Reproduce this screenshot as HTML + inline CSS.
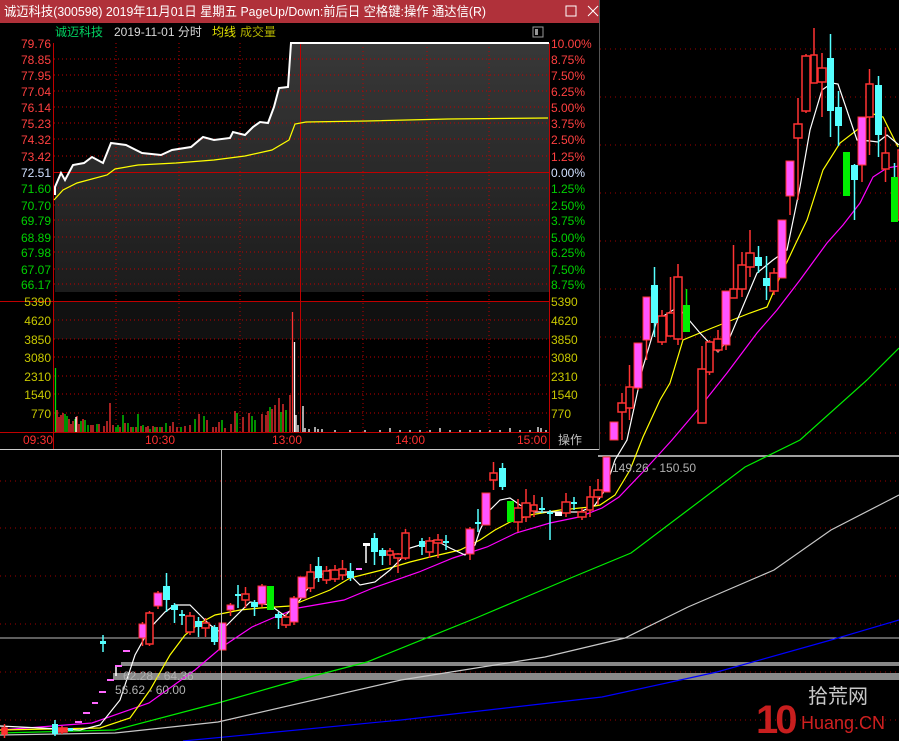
<!DOCTYPE html>
<html><head><meta charset="utf-8"><style>
html,body{margin:0;padding:0;background:#000;width:899px;height:741px;overflow:hidden}
svg{display:block;font-family:"Liberation Sans","Noto Sans CJK SC",sans-serif}
.h{fill:#000;stroke:#ff3333;stroke-width:1.5}
.p{fill:#ff55ff;stroke:#ff3333;stroke-width:1}
.c{fill:#55ffff}
.g{fill:#00ee00}
</style></head><body>
<svg width="899" height="741" viewBox="0 0 899 741" xmlns="http://www.w3.org/2000/svg">
<rect width="899" height="741" fill="#000"/>
<g stroke="#a00000" stroke-dasharray="1,4" stroke-width="1">
<path d="M0 49H899M0 97H899M0 145H899M0 193H899M0 241H899M0 289H899M0 337H899M0 385H899M0 433H899M0 481H899M0 528H899M0 576H899M0 624H899M0 672H899M0 720H899"/>
</g>
<path d="M598 456H899" stroke="#a0a0a0" stroke-width="2"/>
<path d="M0 638H899" stroke="#bbbbbb" stroke-width="1"/>
<rect x="121" y="662" width="778" height="4" fill="#888"/>
<rect x="113" y="673" width="786" height="7" fill="#888"/>
<g fill="none" stroke-width="1.2">
<polyline stroke="#0000ff" points="183,741 401,720 602,697 717,672 831,640 899,620"/>
<polyline stroke="#c8c8c8" points="0,735 115,733 218,722 401,680 545,657 625,638 688,607 774,570 831,530 899,495"/>
<polyline stroke="#00ee00" points="0,733 115,730 218,703 298,680 367,662 476,618 573,577 631,553 688,510 745,467 800,440 867,380 899,348"/>
<polyline stroke="#ff00ff" points="0,730 92,723 149,703 195,670 222,647 252,627 275,617 298,608 344,600 373,588 419,572 453,558 487,547 516,533 550,523 579,517 602,508 619,497 642,473 672,440 700,407 727,373 757,333 777,310 800,280 827,243 843,225 860,203 873,177 887,168 899,166"/>
<polyline stroke="#ffff00" points="0,730 100,728 130,718 150,690 170,655 185,635 200,623 215,615 240,610 260,608 290,606 310,598 330,590 350,578 370,573 390,568 410,562 430,557 460,550 480,540 495,530 510,522 530,515 560,510 590,507 600,505 615,495 630,470 643,437 660,400 670,383 683,340 712,328 750,313 767,307 780,277 795,245 807,220 823,170 840,143 857,130 870,113 883,117 898,147"/>
<polyline stroke="#ffffff" points="0,726 80,730 100,725 120,700 135,655 150,628 165,612 175,605 190,605 200,615 210,625 220,632 230,622 250,602 270,605 285,616 300,600 315,578 330,570 350,575 360,585 375,582 390,570 400,560 410,548 420,545 435,540 450,548 465,555 475,545 480,530 490,510 500,500 510,498 520,505 535,512 560,512 580,512 595,505 605,490 615,460 627,440 643,367 657,320 678,307 700,333 718,352 730,337 757,273 773,260 787,250 800,187 810,130 822,90 832,83 838,84 857,140 870,141 878,142 887,135 899,145"/>
</g>
<g stroke-width="1.5">
<path stroke="#ff3333" d="M149.5 611V646M190 612V635M205.5 618V637M245.5 587V608M286 614V628M310.5 564V592M326.5 566V584M335 565V582M342.5 560V580M390 548V565M398 553V573M405.5 529V560M429.5 537V558M438 534V558M493.5 462V490M518 499V532M526 489V522M534 495V517M566 493V517M582 508V520M590 486V517M598 479V505M622 393V440M629.5 365V420M662 310V345M670.5 277V336M678 264V345M702 346V423M709.5 340V375M718 330V352M733.5 245V298M742 252V297M750 230V277M774 268V295M798 98V200M806 54V113M814 28V83M822 53V117M869.5 69V155M885.5 127V182M142.5 622V646M158 591V609M230.5 603V616M262 584V607M294 596V625M470 527V560M638 343V390M646.5 297V360M726 291V350M790 161V215M862 117V182M4.5 724V738M62 726V734"/>
<path stroke="#55ffff" d="M103 635V652M166.5 573V612M174.5 603V623M182 610V625M198.5 617V637M214.5 625V645M238 585V608M254.5 600V616M278.5 612V629M318.5 557V582M350.5 563V581M374.5 533V565M382.5 548V565M422 538V555M446 535V550M478 509V532M502.5 463V490M542 497V513M550 510V540M574 497V510M654.5 267V337M758.5 246V273M766.5 256V300M830.5 34V137M838.5 91V146M854.5 164V220M878.5 76V157M894.5 163V222M55 720V736"/>
<path stroke="#00ee00" d="M686.5 289V332"/>
<path stroke="#fff" d="M366 544V563M116 666V676"/>
</g>
<g class="h">
<rect x="146" y="613" width="7" height="31"/><rect x="186" y="616" width="8" height="16"/><rect x="202" y="623" width="7" height="5"/><rect x="242" y="594" width="7" height="6"/><rect x="282" y="617" width="8" height="8"/><rect x="307" y="572" width="7" height="16"/><rect x="323" y="571" width="7" height="9"/><rect x="331" y="570" width="8" height="9"/><rect x="339" y="569" width="7" height="6"/><rect x="387" y="551" width="6" height="4"/><rect x="394" y="554" width="8" height="4"/><rect x="402" y="533" width="7" height="25"/><rect x="426" y="541" width="7" height="11"/><rect x="434" y="540" width="8" height="3"/><rect x="490" y="473" width="7" height="7"/><rect x="514" y="508" width="8" height="14"/><rect x="522" y="503" width="8" height="14"/><rect x="531" y="505" width="6" height="6"/><rect x="562" y="502" width="8" height="11"/><rect x="578" y="512" width="8" height="5"/><rect x="587" y="497" width="6" height="13"/><rect x="594" y="490" width="8" height="7"/><rect x="618" y="403" width="8" height="9"/><rect x="626" y="387" width="7" height="21"/><rect x="658" y="316" width="8" height="26"/><rect x="667" y="313" width="7" height="23"/><rect x="674" y="277" width="8" height="62"/><rect x="698" y="369" width="8" height="54"/><rect x="706" y="342" width="7" height="30"/><rect x="714" y="339" width="8" height="11"/><rect x="730" y="289" width="7" height="9"/><rect x="738" y="265" width="8" height="24"/><rect x="746" y="253" width="8" height="14"/><rect x="770" y="273" width="8" height="18"/><rect x="794" y="124" width="8" height="14"/><rect x="802" y="56" width="8" height="55"/><rect x="811" y="55" width="6" height="28"/><rect x="818" y="68" width="8" height="14"/><rect x="866" y="84" width="7" height="33"/><rect x="882" y="153" width="7" height="16"/><rect x="898" y="150" width="4" height="70"/>
<rect x="2" y="728" width="5" height="6" fill="#ff3333"/><rect x="58" y="728" width="9" height="4" fill="#ff3333"/>
</g>
<rect x="555" y="512" width="7" height="4" fill="#fff"/>
<g class="p">
<rect x="139" y="624" width="7" height="14"/><rect x="154" y="593" width="8" height="13"/><rect x="219" y="623" width="7" height="27"/><rect x="227" y="605" width="7" height="5"/><rect x="258" y="586" width="8" height="18"/><rect x="290" y="598" width="8" height="24"/><rect x="298" y="577" width="8" height="21"/><rect x="466" y="529" width="8" height="25"/><rect x="482" y="493" width="8" height="32"/><rect x="603" y="457" width="7" height="35"/><rect x="610" y="422" width="8" height="18"/><rect x="634" y="343" width="8" height="45"/><rect x="643" y="297" width="7" height="43"/><rect x="722" y="291" width="8" height="54"/><rect x="778" y="220" width="8" height="58"/><rect x="786" y="161" width="8" height="35"/><rect x="858" y="117" width="8" height="48"/>
</g>
<g fill="#ff66ff"><rect x="75" y="721" width="7" height="2"/><rect x="83" y="712" width="7" height="2"/><rect x="92" y="702" width="6" height="2"/><rect x="99" y="691" width="7" height="2"/><rect x="107" y="679" width="7" height="2"/><rect x="115" y="665" width="7" height="2"/><rect x="123" y="650" width="7" height="2"/><rect x="356" y="568" width="6" height="2"/><rect x="363" y="543" width="7" height="3" fill="#fff"/></g>
<g class="c">
<rect x="100" y="641" width="6" height="3"/><rect x="163" y="586" width="7" height="14"/><rect x="171" y="605" width="7" height="5"/><rect x="179" y="614" width="6" height="2"/><rect x="195" y="621" width="7" height="6"/><rect x="211" y="627" width="7" height="15"/><rect x="235" y="594" width="6" height="2"/><rect x="251" y="602" width="7" height="5"/><rect x="275" y="614" width="7" height="4"/><rect x="315" y="566" width="7" height="12"/><rect x="347" y="571" width="7" height="7"/><rect x="371" y="538" width="7" height="14"/><rect x="379" y="550" width="7" height="6"/><rect x="419" y="541" width="6" height="6"/><rect x="443" y="541" width="6" height="2"/><rect x="475" y="522" width="6" height="2"/><rect x="499" y="468" width="7" height="19"/><rect x="539" y="508" width="6" height="2"/><rect x="547" y="512" width="6" height="2"/><rect x="571" y="502" width="6" height="2"/><rect x="651" y="285" width="7" height="38"/><rect x="755" y="257" width="7" height="9"/><rect x="763" y="278" width="7" height="8"/><rect x="827" y="58" width="7" height="53"/><rect x="835" y="107" width="7" height="19"/><rect x="851" y="165" width="7" height="15"/><rect x="875" y="85" width="7" height="50"/><rect x="52" y="724" width="6" height="10"/><rect x="68" y="728" width="5" height="3"/>
</g>
<g class="g"><rect x="267" y="586" width="7" height="24"/><rect x="507" y="501" width="7" height="21"/><rect x="683" y="305" width="7" height="27"/><rect x="843" y="152" width="7" height="44"/><rect x="891" y="177" width="7" height="45"/></g>
<g font-size="12" fill="#b0b0b0">
<text x="612" y="472">149.26 - 150.50</text>
<text x="123" y="680">62.28 - 64.36</text>
<text x="115" y="694">56.62 - 60.00</text>
</g>
<path d="M221.5 449V741" stroke="#bbb" stroke-width="1"/>
<text x="756" y="733" font-size="40" font-weight="bold" fill="#c81e1e" font-family="Liberation Sans" letter-spacing="-3">10</text>
<text x="808" y="703" font-size="20" fill="#c8c8c8" font-family="Noto Sans CJK SC">拾荒网</text>
<text x="801" y="729" font-size="18" fill="#d02020">Huang.CN</text>

<rect x="0" y="0" width="600" height="450" fill="#000"/>
<rect x="0" y="0" width="600" height="23" fill="#b0313a"/>
<text x="4" y="16" font-size="13" fill="#fff" textLength="482" lengthAdjust="spacingAndGlyphs">诚迈科技(300598) 2019年11月01日 星期五 PageUp/Down:前后日 空格键:操作 通达信(R)</text>
<rect x="566" y="6" width="10" height="10" fill="none" stroke="#fff" stroke-width="1"/>
<path d="M588 6L598 16M598 6L588 16" stroke="#fff" stroke-width="1"/>
<text x="55" y="36" font-size="12" fill="#00d060">诚迈科技</text>
<text x="114" y="36" font-size="12" fill="#d8d8d8">2019-11-01 分时</text>
<text x="212" y="36" font-size="12" fill="#e0e000">均线</text>
<text x="240" y="36" font-size="12" fill="#b0b000">成交量</text>
<rect x="533" y="27" width="10" height="10" fill="none" stroke="#999" stroke-width="1"/><rect x="535" y="29" width="3" height="6" fill="#999"/>
<defs><linearGradient id="gf" x1="0" y1="0" x2="0" y2="1"><stop offset="0" stop-color="#383838"/><stop offset="1" stop-color="#1c1c1c"/></linearGradient></defs>
<polygon fill="url(#gf)" points="55,187 61,173 65,180 73,165 84,163 92,157 103,163 111,143 126,145 142,153 161,155 172,150 191,147 203,137 214,140 230,138 233,132 245,135 253,127 260,122 268,123 274,107 279,88 288,87 291,43 549,43 549,292 55,292"/>
<rect x="54" y="301" width="495" height="38" fill="#111"/>
<g stroke="#c00000" stroke-dasharray="1,3" stroke-width="1">
<path d="M54 59H549M54 75H549M54 91H549M54 107H549M54 123H549M54 139H549M54 156H549M54 188H549M54 205H549M54 220H549M54 237H549M54 252H549M54 269H549M54 284H549M54 320H549M54 339H549M54 357H549M54 376H549M54 394H549M54 413H549M116 43V432M179 43V432M240 43V432M363 43V432M427 43V432M489 43V432"/>
</g>
<g stroke="#c00000" stroke-width="1" fill="none">
<path d="M53.5 43V449M549.5 43V449M300.5 43V432M54 172.5H549M0 301.5H549M0 432.5H549"/>
</g>
<polyline fill="none" stroke="#ffff00" stroke-width="1.2" points="54,200 63,190 77,183 107,175 115,169 138,165 176,163 214,160 245,156 272,150 289,140 295,124 306,122 367,121 448,119 548,118"/>
<polyline fill="none" stroke="#fff" stroke-width="2" points="55,195 55,187 61,173 65,180 73,165 84,163 92,157 103,163 111,143 126,145 142,153 161,155 172,150 191,147 203,137 214,140 230,138 233,132 245,135 253,127 260,122 268,123 274,107 279,88 288,87 291,43 549,43"/>
<g stroke-width="1.3">
<path stroke="#00dd00" d="M55.5 432V368M65 432V414M67 432V416M75 432V419M81 432V421M85 432V420M88 432V425M97 432V424M116 432V427M118 432V425M123 432V415M128 432V423M133 432V427M138 432V414M143 432V425M150 432V429M155 432V427M160 432V427M166 432V423M181 432V427M195 432V419M204 432V416M222 432V420M237 432V413M252 432V416M255 432V420M270 432V407M281 432V412M286 432V410"/>
<path stroke="#ff3333" d="M57 432V410M59 432V417M61 432V415M63 432V413M69 432V419M71 432V424M73 432V421M77 432V416M79 432V424M83 432V419M91 432V425M93 432V425M99 432V424M104 432V426M107 432V421M110 432V403M113 432V425M120 432V427M125 432V423M131 432V427M136 432V427M141 432V426M146 432V427M148 432V426M153 432V426M157 432V427M162 432V427M170 432V426M173 432V422M177 432V427M185 432V426M190 432V425M199 432V414M207 432V420M213 432V427M216 432V427M219 432V422M225 432V428M231 432V424M235 432V411M243 432V417M249 432V413M262 432V414M266 432V415M268 432V411M272 432V409M275 432V405M279 432V398M283 432V404M290 432V395M292.5 432V312"/>
<path stroke="#fff" d="M76 432V417M294.5 432V342M296 432V415M298 432V425M303 432V406M305 432V428M309 432V429M315 432V427M318 432V429M322 432V429M335 432V430M350 432V430M365 432V430M380 432V430M390 432V428M400 432V430M410 432V430M420 432V430M430 432V430M440 432V428M450 432V430M460 432V430M470 432V430M480 432V430M490 432V430M500 432V430M510 432V428M520 432V430M530 432V430M538 432V427M541 432V428M546 432V430"/>
</g>
<g font-size="12" text-anchor="end">
<g fill="#ff4040"><text x="51" y="48">79.76</text><text x="51" y="64">78.85</text><text x="51" y="80">77.95</text><text x="51" y="96">77.04</text><text x="51" y="112">76.14</text><text x="51" y="128">75.23</text><text x="51" y="144">74.32</text><text x="51" y="161">73.42</text></g>
<text x="51" y="177" fill="#d0e0ff">72.51</text>
<g fill="#00d000"><text x="51" y="193">71.60</text><text x="51" y="210">70.70</text><text x="51" y="225">69.79</text><text x="51" y="242">68.89</text><text x="51" y="257">67.98</text><text x="51" y="274">67.07</text><text x="51" y="289">66.17</text></g>
<g fill="#c8c800"><text x="51" y="306">5390</text><text x="51" y="325">4620</text><text x="51" y="344">3850</text><text x="51" y="362">3080</text><text x="51" y="381">2310</text><text x="51" y="399">1540</text><text x="51" y="418">770</text></g>
</g>
<g font-size="12">
<g fill="#ff4040"><text x="551" y="48">10.00%</text><text x="551" y="64">8.75%</text><text x="551" y="80">7.50%</text><text x="551" y="96">6.25%</text><text x="551" y="112">5.00%</text><text x="551" y="128">3.75%</text><text x="551" y="144">2.50%</text><text x="551" y="161">1.25%</text></g>
<text x="551" y="177" fill="#d0e0ff">0.00%</text>
<g fill="#00d000"><text x="551" y="193">1.25%</text><text x="551" y="210">2.50%</text><text x="551" y="225">3.75%</text><text x="551" y="242">5.00%</text><text x="551" y="257">6.25%</text><text x="551" y="274">7.50%</text><text x="551" y="289">8.75%</text></g>
<g fill="#c8c800"><text x="551" y="306">5390</text><text x="551" y="325">4620</text><text x="551" y="344">3850</text><text x="551" y="362">3080</text><text x="551" y="381">2310</text><text x="551" y="399">1540</text><text x="551" y="418">770</text></g>
<g fill="#ff3030"><text x="23" y="444">09:30</text><text x="145" y="444">10:30</text><text x="272" y="444">13:00</text><text x="395" y="444">14:00</text><text x="517" y="444">15:00</text></g>
<text x="558" y="444" fill="#c0c0c0">操作</text>
</g>
<path d="M0 449.5H600" stroke="#ccc" stroke-width="1"/>
<path d="M599.5 0V450" stroke="#555" stroke-width="1"/>
</svg>
</body></html>
